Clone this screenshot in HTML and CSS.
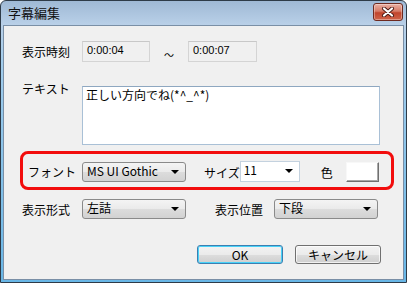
FILE: index.html
```html
<!DOCTYPE html>
<html lang="ja">
<head>
    <meta charset="UTF-8">
    <title>字幕編集</title>
    <link rel="stylesheet" href="styles.css">
</head>
<body>
    <div class="window">
        <div class="titlebar">
            <span class="title">字幕編集</span>
            <button class="close">
                <svg width="14" height="10" viewBox="0 0 14 10">
                    <path d="M3 1.5 L11 8.5 M11 1.5 L3 8.5" stroke="#4a1a14" stroke-width="4" stroke-linecap="round"/>
                    <path d="M3 1.5 L11 8.5 M11 1.5 L3 8.5" stroke="#fff" stroke-width="2.2" stroke-linecap="round"/>
                </svg>
            </button>
        </div>

        <div class="client">
            <div class="row time-row">
                <span class="label">表示時刻</span>
                <div class="readonly">0:00:04</div>
                <span class="tilde">～</span>
                <div class="readonly end">0:00:07</div>
            </div>

            <div class="row text-row">
                <span class="label">テキスト</span>
                <div class="textbox">正しい方向でね(*^_^*)</div>
            </div>

            <div class="font-group">
                <span class="label short">フォント</span>
                <div class="combo wide">MS UI Gothic<i class="arrow"></i></div>
                <span class="size-label">サイズ</span>
                <div class="combo edit">11<i class="arrow"></i></div>
                <span class="color-label">色</span>
                <button class="swatch"></button>
            </div>

            <div class="row select-row">
                <span class="label">表示形式</span>
                <div class="combo wide">左詰<i class="arrow"></i></div>
                <span class="pos-label">表示位置</span>
                <div class="combo wide">下段<i class="arrow"></i></div>
            </div>

            <div class="buttons">
                <button class="btn default">OK</button>
                <button class="btn">キャンセル</button>
            </div>
        </div>
    </div>
</body>
</html>
```

FILE: styles.css
```css
body {
    margin: 0;
    font-family: "Noto Sans CJK JP", "DejaVu Sans", sans-serif;
    font-size: 12px;
    color: #000;
    background: #fff;
}
.window {
    width: 407px;
    height: 283px;
    box-sizing: border-box;
    border: 1px solid #2e3b48;
    border-radius: 6px 6px 0 0;
    background: linear-gradient(#9fb9d5, #b9d0e8 24px, #a3cdec 60px, #68b6e6);
    padding: 0 2px 2px 2px;
    display: flex;
    flex-direction: column;
}
.titlebar {
    height: 24px;
    display: flex;
    align-items: center;
    justify-content: space-between;
    padding: 0 1px 0 5px;
}
.title {
    font-size: 13px;
    color: #111;
    margin-top: -2px;
}
.close {
    width: 30px;
    height: 18px;
    margin-top: -2px;
    padding: 0;
    border: 1px solid #6e2a20;
    border-radius: 3px;
    background: linear-gradient(#eab0a4, #d67a66 45%, #c1442c 55%, #d0644a);
    display: flex;
    align-items: center;
    justify-content: center;
    box-shadow: inset 0 0 0 1px rgba(255, 255, 255, 0.35);
}
.client {
    flex: 1;
    background: #f0f0f0;
    border: 1px solid #7a8fa6;
    padding: 0 0 0 16px;
}
.row {
    display: flex;
    align-items: center;
    padding-left: 2px;
}
.label {
    width: 60px;
    flex-shrink: 0;
    white-space: nowrap;
}
.label.short {
    width: 54px;
}
.time-row {
    margin-top: 15px;
    height: 21px;
}
.readonly {
    width: 68px;
    height: 21px;
    box-sizing: border-box;
    border: 1px solid #d4d4d4;
    border-top-color: #c8c8c8;
    padding: 1px 4px;
    font-size: 11px;
    line-height: 15px;
    font-family: "Liberation Sans", sans-serif;
}
.readonly.end {
    width: 69px;
}
.tilde {
    width: 38px;
    text-align: center;
    padding-top: 6px;
    font-size: 10px;
}
.text-row {
    margin-top: 24px;
    align-items: flex-start;
}
.text-row .label {
    line-height: 14px;
    margin-top: -4px;
}
.textbox {
    width: 298px;
    height: 59px;
    box-sizing: border-box;
    border: 1px solid #a9c0d6;
    border-top-color: #8ea7c0;
    background: #fff;
    padding: 0 3px;
    line-height: 15px;
}
.font-group {
    margin: 6px 9px 0 0;
    height: 39px;
    box-sizing: border-box;
    border: 3px solid #f20d0d;
    border-radius: 8px;
    display: flex;
    align-items: center;
    padding: 2px 0 0 5px;
}
.combo {
    position: relative;
    height: 20px;
    box-sizing: border-box;
    border: 1px solid #8a8a8a;
    border-radius: 3px;
    background: linear-gradient(#f4f4f4, #eaeaea 50%, #dcdcdc 52%, #d2d2d2);
    padding: 0 4px;
    line-height: 16px;
    flex-shrink: 0;
}
.combo.wide {
    width: 104px;
}
.combo.edit {
    width: 60px;
    background: #fff;
    border-color: #c4d2df;
    border-radius: 0;
    padding-left: 3px;
    height: 21px;
    margin-top: -1px;
}
.arrow {
    position: absolute;
    right: 6px;
    top: 7px;
    width: 0;
    height: 0;
    border-left: 4px solid transparent;
    border-right: 4px solid transparent;
    border-top: 4px solid #000;
}
.size-label {
    margin-left: 18px;
    white-space: nowrap;
    padding-top: 1px;
}
.color-label {
    margin-left: 21px;
    width: 25px;
    padding-top: 1px;
}
.swatch {
    width: 33px;
    height: 20px;
    padding: 0;
    background: #fff;
    border: 1px solid;
    border-color: #f8f8f8 #707070 #707070 #f8f8f8;
    box-shadow: inset -1px -1px 0 #a8a8a8;
}
.select-row {
    margin-top: 9px;
    height: 20px;
}
.pos-label {
    margin-left: 29px;
    width: 59px;
    white-space: nowrap;
    padding-top: 1px;
}
.select-row .label {
    padding-top: 1px;
}
.buttons {
    margin-top: 26px;
    display: flex;
    justify-content: flex-end;
    gap: 12px;
    padding-right: 22px;
}
.btn {
    width: 86px;
    height: 19px;
    padding: 0;
    font-family: inherit;
    font-size: 12px;
    line-height: 15px;
    border: 1px solid #707070;
    border-radius: 3px;
    background: linear-gradient(#f3f3f3, #ebebeb 50%, #dddddd 52%, #cfcfcf);
    box-shadow: inset 0 0 0 1px rgba(255, 255, 255, 0.7);
}
.btn.default {
    border-color: #3c7fb1;
    box-shadow: inset 0 0 0 1px #48d2f8;
}
```
